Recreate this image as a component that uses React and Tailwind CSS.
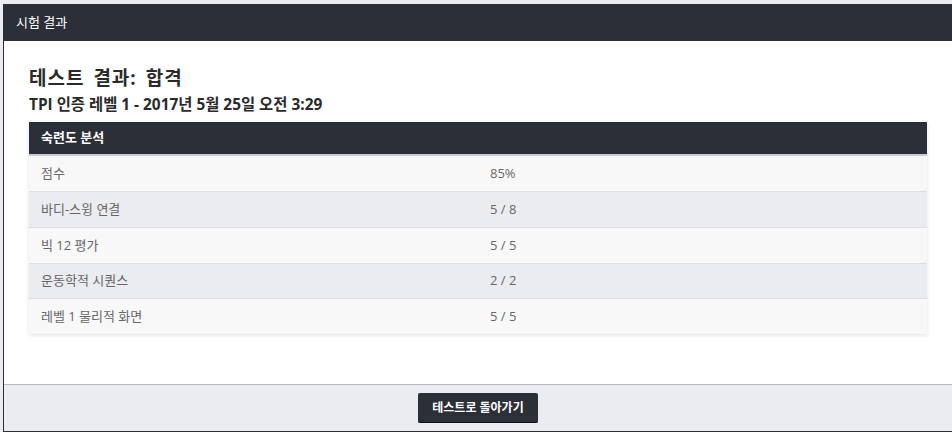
export default function App() {
  const rows = [
    ["점수", "85%", "h-[36px]"],
    ["바디-스윙 연결", "5 / 8", "h-[36px]"],
    ["빅 12 평가", "5 / 5", "h-[36px]"],
    ["운동학적 시퀀스", "2 / 2", "h-[35px]"],
    ["레벨 1 물리적 화면", "5 / 5", "h-[35px]"],
  ];
  const font = { fontFamily: '"Open Sans", "Noto Sans CJK KR", sans-serif' };
  return (
    <div className="w-[952px] h-[432px] bg-[#ececf0] pt-[4px] pl-[3px] overflow-hidden" style={font}>
      <div className="h-[428px] flex flex-col border-l border-b border-[#2b2f38] bg-white">
        <div className="h-[37px] shrink-0 bg-[#2b2f38] text-white text-[13px] flex items-center px-[12px]">
          시험 결과
        </div>
        <div className="flex-1 px-[25px] pt-[23px]">
          <h1 className="text-[19px] leading-[28px] font-bold text-[#2a2a2a] tracking-[1px] [word-spacing:3px]">테스트 결과: 합격</h1>
          <h2 className="text-[15.4px] leading-[20px] font-bold text-[#2a2a2a] mt-[3px]">
            TPI 인증 레벨 1 - 2017년 5월 25일 오전 3:29
          </h2>
          <div className="mt-[7px] shadow-[0_1px_4px_rgba(0,0,0,0.12)]">
            <div className="h-[34px] bg-[#2b2f38] border-b-2 border-[#c9ccd6] text-white text-[13px] font-bold flex items-center px-[12px]">
              숙련도 분석
            </div>
            {rows.map(([a, b, h], i) => (
              <div
                key={i}
                className={`${h} flex items-center text-[13px] text-[#666] px-[12px] ${i < rows.length - 1 ? "border-b border-[#dcdde2]" : ""} ${i % 2 === 0 ? "bg-[#f8f8f8]" : "bg-[#ebecf0]"}`}
              >
                <div className="w-[449px]">{a}</div>
                <div>{b}</div>
              </div>
            ))}
          </div>
        </div>
        <div className="h-[47px] shrink-0 border-t border-[#b1b7c5] bg-[#ebecf0] flex items-center justify-center">
          <button className="h-[30px] px-[14px] bg-[#2b2f38] text-white text-[12px] font-bold rounded-[2px] border-b border-[#111]">
            테스트로 돌아가기
          </button>
        </div>
      </div>
    </div>
  );
}
